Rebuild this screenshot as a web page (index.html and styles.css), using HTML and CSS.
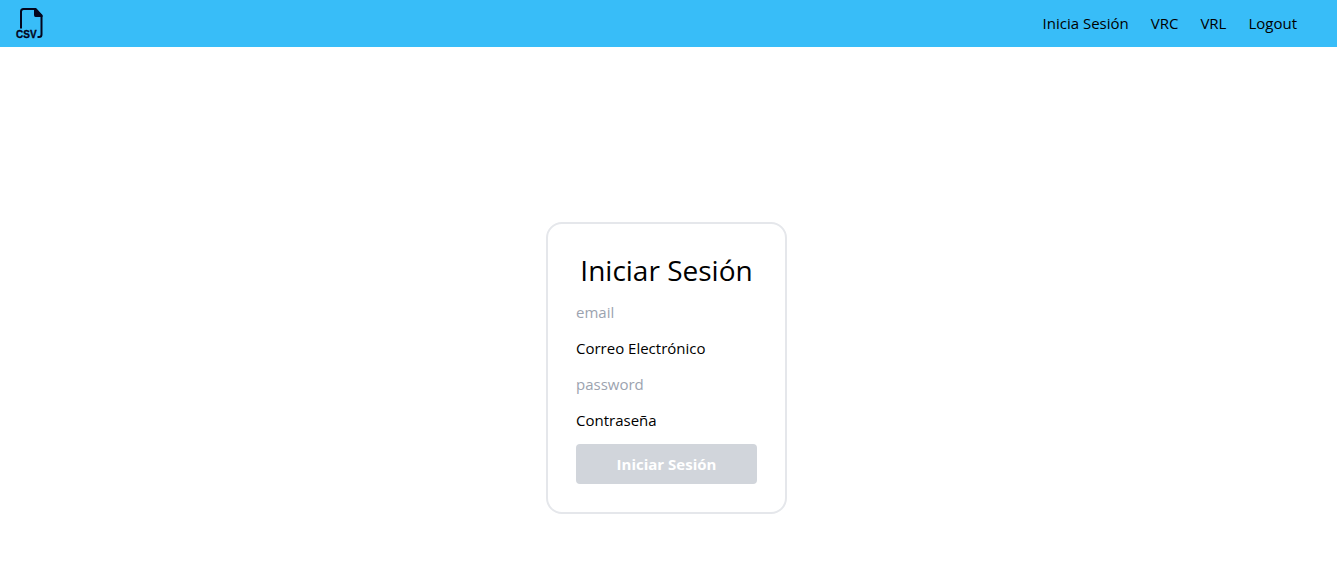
FILE: index.html
```html
<!DOCTYPE html>
<html lang="es">
<head>
<meta charset="utf-8">
<meta name="viewport" content="width=device-width, initial-scale=1">
<title>Iniciar Sesión</title>
<link rel="stylesheet" href="styles.css">
</head>
<body>
<header class="navbar">
  <a class="brand" href="#" aria-label="Inicio">
    <svg class="logo" viewBox="0 0 30 34" role="img" aria-hidden="true">
      <path class="sheet" d="M6 22.500V5.500Q6 3 8.500 3H20L26.500 10V28.500Q26.500 31 24 31H22.500"/>
      <path class="fold" d="M19 2H21L27.500 9V11H20.500Q19 11 19 9Z"/>
      <text class="logo-text" x="1" y="32">CSV</text>
    </svg>
  </a>
  <nav class="links">
    <a href="#">Inicia Sesión</a>
    <a href="#">VRC</a>
    <a href="#">VRL</a>
    <a href="#">Logout</a>
  </nav>
</header>
<main class="page">
  <form class="card">
    <h1 class="title">Iniciar Sesión</h1>
    <input class="field" id="email" type="email" placeholder="email">
    <label class="label" for="email">Correo Electrónico</label>
    <input class="field" id="password" type="password" placeholder="password">
    <label class="label" for="password">Contraseña</label>
    <button class="submit" type="submit" disabled>Iniciar Sesión</button>
  </form>
</main>
</body>
</html>
```
FILE: styles.css
```css
* { box-sizing: border-box; margin: 0; }
body {
  background: #fff;
  color: #000;
  font: 15px/24px "Segoe UI", "Open Sans", "Noto Sans", sans-serif;
}
.navbar {
  display: flex;
  align-items: center;
  justify-content: space-between;
  padding: 6px 40px 7px 15px;
  background: #38bdf8;
}
.brand { display: flex; }
.logo { width: 30px; height: 34px; }
.sheet { fill: none; stroke: #03051c; stroke-width: 2; }
.fold { fill: #03051c; }
.logo-text {
  font: bold 10px "Liberation Sans", Arial, sans-serif;
  fill: #03051c;
  stroke: #03051c;
  stroke-width: 0.3;
}
.links { display: flex; gap: 22px; }
.links a { color: inherit; text-decoration: none; }
.page {
  display: flex;
  justify-content: center;
  padding: 175px 4px 24px 0;
}
.card {
  display: flex;
  flex-direction: column;
  gap: 12px;
  width: 241px;
  padding: 28px;
  border: 2px solid #e5e7eb;
  border-radius: 16px;
}
.title {
  font-size: 28px;
  font-weight: 400;
  line-height: 36px;
  text-align: center;
  white-space: nowrap;
}
.field {
  width: 100%;
  height: 24px;
  padding: 0;
  border: 0;
  outline: 0;
  background: transparent;
  color: inherit;
  font: inherit;
}
.field::placeholder { color: #9ca3af; opacity: 1; }
.submit {
  height: 40px;
  padding: 0 16px;
  border: 0;
  border-radius: 4px;
  background: #d1d5db;
  color: #fff;
  font: inherit;
  font-weight: 700;
}
```
